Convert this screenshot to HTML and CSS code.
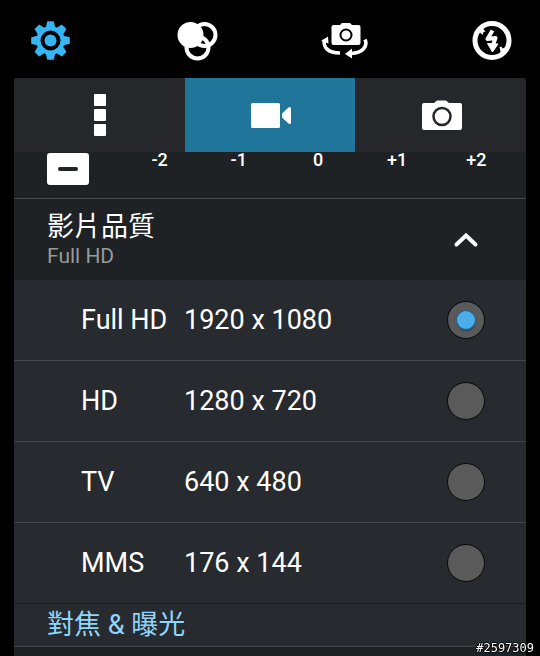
FILE: index.html
```html
<!DOCTYPE html>
<html lang="zh-Hant">
<head>
<meta charset="utf-8">
<meta name="viewport" content="width=device-width, initial-scale=1">
<title>影片品質</title>
<link rel="stylesheet" href="styles.css">
</head>
<body>
<nav class="toolbar">
  <button class="tool tool-active" type="button" aria-label="設定">
    <svg width="48" height="48" viewBox="-24.500 -24.500 48 48" fill="currentColor">
      <g id="teeth">
        <path id="tooth" d="M-5-12L-3.2-19.3H3.2L5-12Z"/>
        <use href="#tooth" transform="rotate(45)"/>
        <use href="#tooth" transform="rotate(90)"/>
        <use href="#tooth" transform="rotate(135)"/>
      </g>
      <use href="#teeth" transform="rotate(180)"/>
      <circle r="14.3"/>
      <circle r="8" fill="none" stroke="#000" stroke-width="4"/>
    </svg>
  </button>
  <button class="tool" type="button" aria-label="特效">
    <svg width="48" height="48" viewBox="0 0 48 48" fill="none" stroke="currentColor" stroke-width="4">
      <circle cx="24.500" cy="31.500" r="11"/>
      <circle cx="31.500" cy="19" r="11"/>
      <circle cx="17.500" cy="19" r="13" fill="currentColor" stroke="none"/>
    </svg>
  </button>
  <button class="tool" type="button" aria-label="切換鏡頭">
    <svg width="48" height="48" viewBox="0 0 48 48">
      <path fill="currentColor" d="M12.500 9H19L21 7H29L31 9H37.500Q39.500 9 39.500 11V27Q39.500 29 37.500 29H12.500Q10.500 29 10.500 27V11Q10.500 9 12.500 9Z"/>
      <circle cx="25" cy="19" r="5.500" fill="none" stroke="#000" stroke-width="2"/>
      <g fill="none" stroke="currentColor" stroke-width="3.600">
        <path d="M3.500 24C2 31 6.500 37 19 37"/>
        <path d="M44 23.500C47 30 42 37 30 37.500"/>
      </g>
      <path fill="currentColor" d="M0 25L7 20.500L7.500 27.500ZM31 32.500V42.500L24 38Z"/>
    </svg>
  </button>
  <button class="tool" type="button" aria-label="關閉閃光燈">
    <svg width="48" height="48" viewBox="0 0 48 48">
      <circle cx="24" cy="24.500" r="17" fill="none" stroke="currentColor" stroke-width="5"/>
      <g stroke="currentColor" stroke-linejoin="round">
        <path fill="none" stroke-width="4" d="M24.500 14.500L19.500 23L27.500 22L25 29"/>
        <path fill="currentColor" stroke-width="1" d="M19.500 27.500L30 28L24.500 36Z"/>
      </g>
      <path fill="currentColor" d="M10 15L14 11.500L17.500 15.500L15.500 16L14.500 19L12.500 17ZM31.500 31L33.500 30.500L34.500 32.500L38 31L33 38Z"/>
    </svg>
  </button>
</nav>

<main class="panel">
  <div class="tabs" role="tablist">
    <button class="tab" type="button" role="tab" aria-selected="false" aria-label="其他">
      <svg width="48" height="48" viewBox="0 0 48 48" fill="currentColor">
        <rect x="19" y="4" width="12" height="12" rx="1"/>
        <rect x="19" y="19" width="12" height="12" rx="1"/>
        <rect x="19" y="34" width="12" height="12" rx="1"/>
      </svg>
    </button>
    <button class="tab" type="button" role="tab" aria-selected="true" aria-label="影片">
      <svg width="48" height="48" viewBox="0 0 48 48" fill="currentColor">
        <rect x="5" y="13" width="29" height="25" rx="1.500"/>
        <path d="M36 23.500L42.500 17.500Q45 16 45 18.500V32.500Q45 35 42.500 33.500L36 27.500Z"/>
      </svg>
    </button>
    <button class="tab" type="button" role="tab" aria-selected="false" aria-label="相機">
      <svg width="48" height="48" viewBox="0 0 48 48">
        <path fill="currentColor" d="M7 13H17L20 10.500H29L32 13H43Q45 13 45 15V38Q45 40 43 40H7Q5 40 5 38V15Q5 13 7 13Z"/>
        <circle cx="25" cy="26.500" r="8.500" fill="none" stroke="#25272b" stroke-width="2.500"/>
      </svg>
    </button>
  </div>

  <div class="exposure">
    <button class="minus" type="button" aria-label="減少曝光">
      <svg width="42" height="32" viewBox="0 0 42 32"><path d="M13 16H29" stroke="#202326" stroke-width="4" stroke-linecap="round"/></svg>
    </button>
    <div class="scale">
      <span>-2</span><span>-1</span><span>0</span><span>+1</span><span>+2</span>
    </div>
  </div>

  <button class="group" type="button" aria-expanded="true">
    <span class="group-text">
      <span class="group-title">影片品質</span>
      <span class="group-value">Full HD</span>
    </span>
    <svg width="38" height="38" viewBox="0 0 38 38" fill="none" stroke="currentColor" stroke-width="4" stroke-linecap="round"><path d="M9.500 23.500L19 14.500L28.500 23.500"/></svg>
  </button>

  <div class="options" role="radiogroup" aria-label="影片品質">
    <label class="option"><span class="name">Full HD</span><span class="size">1920 x 1080</span><input type="radio" name="quality" checked></label>
    <label class="option"><span class="name">HD</span><span class="size">1280 x 720</span><input type="radio" name="quality"></label>
    <label class="option"><span class="name">TV</span><span class="size">640 x 480</span><input type="radio" name="quality"></label>
    <label class="option"><span class="name">MMS</span><span class="size">176 x 144</span><input type="radio" name="quality"></label>
  </div>

  <h2 class="section">對焦 &amp; 曝光</h2>
</main>
<div class="stamp">#2597309</div>
</body>
</html>
```
FILE: styles.css
```css
* {
  box-sizing: border-box;
}

body {
  display: flex;
  flex-direction: column;
  min-height: 100vh;
  margin: 0;
  background: #000;
  color: #fff;
  font-family: Roboto, "Noto Sans CJK TC", sans-serif;
}

button {
  margin: 0;
  padding: 0;
  border: 0;
  background: none;
  color: inherit;
  font: inherit;
}

svg {
  display: block;
}

.toolbar {
  display: flex;
  justify-content: space-between;
  padding: 16px 24px 14px 26px;
}

.tool-active {
  color: #36b5f5;
}

.panel {
  flex: 1;
  margin: 0 14px;
  border-radius: 3px 3px 0 0;
  background: #1e2225;
  overflow: hidden;
}

.tabs {
  display: grid;
  grid-template-columns: repeat(3, 1fr);
  height: 74px;
}

.tab {
  display: grid;
  place-items: center;
  padding-bottom: 2px;
  background: #25272b;
}

.tab[aria-selected="true"] {
  background: #20769a;
}

.exposure {
  display: flex;
  align-items: flex-start;
  gap: 31px;
  height: 47px;
  padding: 1px 10px 0 33px;
  border-bottom: 1px solid #45484b;
}

.minus {
  border-radius: 3px;
  background: #fff;
}

.scale {
  flex: 1;
  display: grid;
  grid-template-columns: repeat(5, 1fr);
  font-size: 18px;
  font-weight: 500;
  line-height: 14px;
  text-align: center;
}

.group {
  display: flex;
  align-items: center;
  justify-content: space-between;
  width: 100%;
  height: 81px;
  padding: 0 41px 0 33px;
  text-align: left;
}

.group-text {
  display: grid;
}

.group-title {
  font-size: 27px;
  line-height: 32px;
}

.group-value {
  color: #999;
  font-size: 21px;
  line-height: 26px;
}

.options {
  background: #272a2f;
}

.option {
  display: flex;
  align-items: center;
  height: 81px;
  padding: 0 41px 0 67px;
  border-bottom: 1px solid #45484b;
  font-size: 27px;
}

.option:last-child {
  border-bottom-color: #1d2023;
}

.name {
  flex: 0 0 103px;
}

.size {
  flex: 1;
}

.option input {
  appearance: none;
  display: grid;
  place-items: center;
  width: 38px;
  height: 38px;
  margin: 0;
  border: 1px solid #070809;
  border-radius: 50%;
  background: #5a5a5a;
}

.option input:checked::before {
  content: "";
  width: 18px;
  height: 18px;
  border-radius: 50%;
  background: #4badea;
  box-shadow: 0 0 0 1px #286083, 0 2px 2px #1d4964;
}

.section {
  height: 43px;
  margin: 0;
  padding: 0 33px;
  border-bottom: 1px solid #45484b;
  background: #272a2f;
  color: #8fd6fb;
  font-size: 27px;
  font-weight: 400;
  line-height: 42px;
}

.stamp {
  position: fixed;
  right: 6px;
  bottom: 0;
  font-family: "DejaVu Sans Mono", monospace;
  font-size: 12px;
  line-height: 15px;
  text-shadow: 1px 0 #000, -1px 0 #000, 0 1px #000, 0 -1px #000;
}
```
